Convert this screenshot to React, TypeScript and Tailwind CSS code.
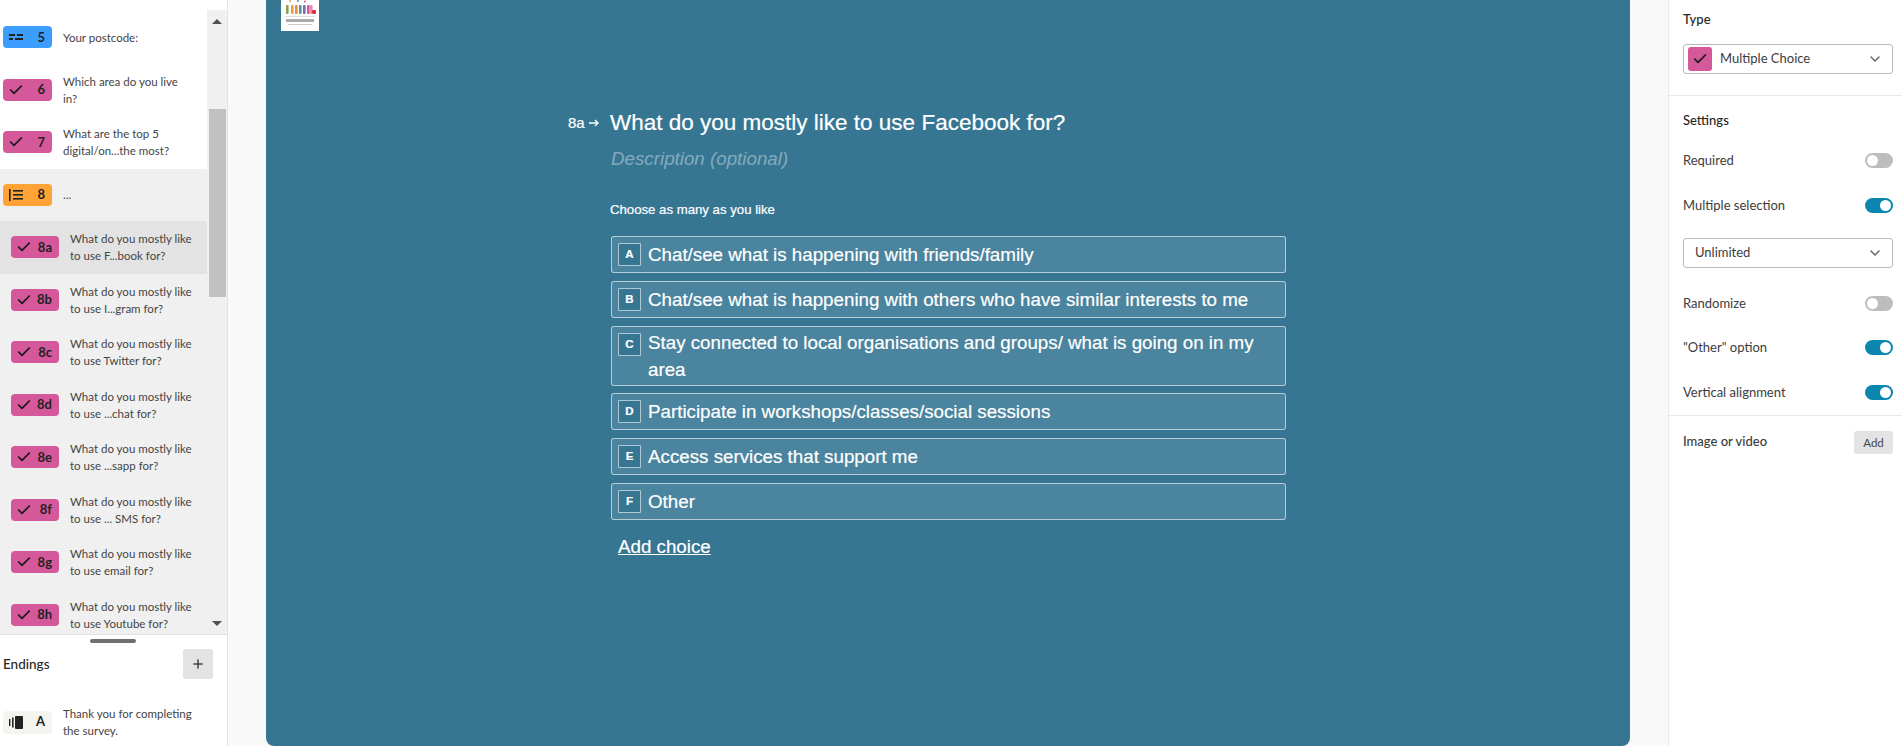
import React from "react";
import { Check, ChevronDown, Plus } from "lucide-react";

const PINK = "bg-[#d5589a]";

function CheckIcon() {
  return <Check className="w-[16px] h-[16px]" strokeWidth={2.6} color="#1a1a1a" />;
}

function ShortIcon() {
  return (
    <svg width="14" height="8" viewBox="0 0 14 8" fill="#222">
      <rect x="0" y="1" width="6" height="2" />
      <rect x="8" y="1" width="6" height="2" />
      <rect x="0" y="5" width="4" height="2" />
      <rect x="6" y="5" width="8" height="2" />
    </svg>
  );
}

function GroupIcon() {
  return (
    <svg width="14" height="12" viewBox="0 0 14 12" fill="#222">
      <rect x="0" y="0" width="1.6" height="12" />
      <rect x="4" y="1" width="10" height="1.6" />
      <rect x="4" y="5" width="10" height="1.6" />
      <rect x="4" y="9" width="10" height="1.6" />
    </svg>
  );
}

function EndIcon() {
  return (
    <svg width="14" height="13" viewBox="0 0 14 13" fill="#222">
      <rect x="0" y="3" width="1.4" height="7" />
      <rect x="3" y="1.5" width="1.6" height="10" />
      <rect x="6" y="0" width="8" height="13" rx="1" />
    </svg>
  );
}

type Row = { n: string; lines: string[]; kind: "check" | "short" | "group"; sub?: boolean; selected?: boolean };

const sub = (n: string, second: string, selected = false): Row => ({
  n,
  lines: ["What do you mostly like", second],
  kind: "check",
  sub: true,
  selected,
});

const rows: Row[] = [
  { n: "5", lines: ["Your postcode:"], kind: "short" },
  { n: "6", lines: ["Which area do you live", "in?"], kind: "check" },
  { n: "7", lines: ["What are the top 5", "digital/on...the most?"], kind: "check" },
  { n: "8", lines: ["..."], kind: "group" },
  sub("8a", "to use F...book for?", true),
  sub("8b", "to use I...gram for?"),
  sub("8c", "to use Twitter for?"),
  sub("8d", "to use ...chat for?"),
  sub("8e", "to use ...sapp for?"),
  sub("8f", "to use ... SMS for?"),
  sub("8g", "to use email for?"),
  sub("8h", "to use Youtube for?"),
];

function QuestionRow({ r }: { r: Row }) {
  const grouped = r.sub || r.kind === "group";
  const bg = r.selected ? "bg-[#e3e3e3]" : grouped ? "bg-[#f0f0f0]" : "bg-white";
  const badge = r.kind === "short" ? "bg-[#3b9eff]" : r.kind === "group" ? "bg-[#ffa337]" : PINK;
  return (
    <div className={`h-[52.5px] shrink-0 flex items-center ${bg} ${r.sub ? "pl-[11px]" : "pl-[3px]"}`}>
      <div className={`${badge} ${r.sub ? "w-[48px]" : "w-[49px]"} h-[22px] rounded-[4px] flex items-center justify-between ${r.kind === "check" ? "pl-[5px]" : "pl-[6px]"} pr-[7px] shrink-0`}>
        {r.kind === "check" ? <CheckIcon /> : r.kind === "short" ? <ShortIcon /> : <GroupIcon />}
        <span className="text-[13px] font-bold text-[#222]">{r.n}</span>
      </div>
      <div className="ml-[11px] text-[11.5px] leading-[17px] text-[#444]">
        {r.lines.map((l) => (
          <div key={l}>{l}</div>
        ))}
      </div>
    </div>
  );
}

function Sidebar() {
  return (
    <aside className="w-[228px] h-[746px] shrink-0 bg-white border-r border-[#e3e3e3] flex flex-col font-['Lato',sans-serif]">
      <div className="h-[10px] shrink-0" />
      <div className="h-[625px] shrink-0 flex overflow-hidden border-b border-[#e3e3e3]">
        <div className="w-[207px] shrink-0 flex flex-col pt-px">
          {rows.map((r) => (
            <QuestionRow key={r.n} r={r} />
          ))}
        </div>
        <div className="w-[20px] shrink-0 bg-[#f0f0f0] flex flex-col items-center pt-[9px] pb-[8px]">
          <div className="w-0 h-0 border-x-[5px] border-x-transparent border-b-[5px] border-b-[#505050]" />
          <div className="mt-[85px] w-[17px] h-[188px] bg-[#c1c1c1]" />
          <div className="flex-1" />
          <div className="w-0 h-0 border-x-[5px] border-x-transparent border-t-[5px] border-t-[#505050]" />
        </div>
      </div>
      <div className="h-[4px] mt-[4px] flex justify-center pr-[1px]">
        <div className="w-[46px] h-[4px] rounded-full bg-[#707070]" />
      </div>
      <div className="mt-[6px] h-[30px] flex items-center justify-between pl-[3px] pr-[14px]">
        <span className="text-[13.5px] font-medium text-[#262626]">Endings</span>
        <button className="w-[30px] h-[30px] rounded-[3px] bg-[#e3e3e3] flex items-center justify-center">
          <Plus className="w-[14px] h-[14px]" strokeWidth={2.6} color="#444" />
        </button>
      </div>
      <div className="mt-[26px] flex items-center pl-[3px]">
        <div className="w-[49px] h-[23px] rounded-[4px] bg-[#f5f5f0] flex items-center justify-between pl-[6px] pr-[7px] shrink-0">
          <EndIcon />
          <span className="text-[13px] font-bold text-[#222]">A</span>
        </div>
        <div className="ml-[11px] text-[11.5px] leading-[17px] text-[#444]">
          <div>Thank you for completing</div>
          <div>the survey.</div>
        </div>
      </div>
    </aside>
  );
}

const choices: [string, string][] = [
  ["A", "Chat/see what is happening with friends/family"],
  ["B", "Chat/see what is happening with others who have similar interests to me"],
  ["C", "Stay connected to local organisations and groups/ what is going on in my area"],
  ["D", "Participate in workshops/classes/social sessions"],
  ["E", "Access services that support me"],
  ["F", "Other"],
];

function Logo() {
  const bars: [number, string][] = [
    [5, "#8aa04e"], [10, "#e8a33d"], [14, "#e98b3a"], [18, "#5f8fb0"], [22, "#7d6aa8"], [26, "#d5589a"], [29, "#e58ab8"],
  ];
  return (
    <div className="ml-[15px] w-[38px] h-[31px] bg-white shrink-0 overflow-hidden">
      <svg width="38" height="31" viewBox="0 0 38 31" className="blur-[0.6px]">
        {bars.map(([x, c]) => (
          <rect key={x} x={x} y={5} width="2.6" height="9" rx="1" fill={c} />
        ))}
        <circle cx="9" cy="1" r="1" fill="#e8a33d" />
        <circle cx="17" cy="1" r="1" fill="#5f8fb0" />
        <circle cx="24" cy="1.5" r="1" fill="#d5589a" />
        <rect x="31" y="10" width="4" height="4" rx="1" fill="#d9343a" />
        <rect x="4" y="16" width="30" height="1" fill="#ddd" />
        <rect x="5" y="19" width="28" height="3" fill="#aaa" />
        <rect x="7" y="24" width="24" height="1" fill="#ccc" />
      </svg>
    </div>
  );
}

function Canvas() {
  return (
    <main className="flex-1 h-[746px] bg-[#f9f9f9] pl-[38px] pr-[38px]">
      <div className="h-full bg-[#367693] rounded-b-[8px] font-['Liberation_Sans',sans-serif] text-white flex flex-col [-webkit-text-stroke:0.2px_white]">
        <Logo />
        <div className="mt-[76px] ml-[302px] flex items-start">
          <div className="w-[43px] flex items-center justify-start h-[32px] gap-[4px] text-[15px] shrink-0">
            <span>8a</span>
            <svg width="10" height="8" viewBox="0 0 10 8" fill="none" stroke="white" strokeWidth="1.4">
              <path d="M0 4h9M6 1l3 3-3 3" />
            </svg>
          </div>
          <div className="w-[675px]">
            <div className="text-[22.5px] leading-[32px] -ml-px">What do you mostly like to use Facebook for?</div>
            <div className="mt-[6px] text-[18.75px] leading-[27px] italic text-white/40 [-webkit-text-stroke:0]">Description (optional)</div>
            <div className="mt-[28px] text-[13.2px] leading-[20px] -ml-px">Choose as many as you like</div>
            <div className="mt-[16px] flex flex-col gap-[8px]">
              {choices.map(([k, t]) => (
                <div key={k} className={`flex items-start rounded-[3px] border border-white/60 bg-white/10 pl-[6px] pr-[20px] py-[2px] min-h-[37px] ${k === "C" ? "-mb-px" : ""}`}>
                  <div className="w-[23px] h-[23px] mt-[4px] shrink-0 border border-white/60 rounded-[1px] bg-[#367693] flex items-center justify-center text-[11.5px] font-bold">
                    {k}
                  </div>
                  <div className="ml-[7px] text-[18.75px] leading-[27px] self-center">{t}</div>
                </div>
              ))}
            </div>
            <div className="mt-[13px] ml-[7px] text-[18.75px] leading-[27px] underline">Add choice</div>
          </div>
        </div>
      </div>
    </main>
  );
}

function Toggle({ on }: { on: boolean }) {
  return (
    <div className={`w-[28px] h-[15px] rounded-full flex items-center px-[2px] ${on ? "bg-[#0b86ae] justify-end" : "bg-[#bdbdbd] justify-start"}`}>
      <div className="w-[11px] h-[11px] rounded-full bg-white" />
    </div>
  );
}

function SettingRow({ label, on, mt }: { label: string; on: boolean; mt: string }) {
  return (
    <div className={`${mt} h-[20px] flex items-center justify-between pl-[14px] pr-[9px]`}>
      <span className="text-[13px] leading-[18px] pb-px text-[#3c3c3c]">{label}</span>
      <Toggle on={on} />
    </div>
  );
}

function RightPanel() {
  return (
    <aside className="w-[234px] h-[746px] shrink-0 bg-white border-l border-[#e9e9e9] font-['Lato',sans-serif] flex flex-col">
      <div className="mt-[10px] h-[20px] pl-[14px] flex items-center text-[13px] font-medium text-[#262626]">Type</div>
      <div className="mt-[14px] ml-[14px] mr-[9px] h-[30px] rounded-[3px] border border-[#b9b9b9] flex items-center pl-[4px] pr-[9px]">
        <div className={`w-[24px] h-[24px] rounded-[3px] ${PINK} flex items-center justify-center`}>
          <CheckIcon />
        </div>
        <span className="ml-[8px] text-[13px] pb-px text-[#3c3c3c] flex-1">Multiple Choice</span>
        <ChevronDown className="w-[16px] h-[16px]" strokeWidth={2.2} color="#666" />
      </div>
      <div className="mt-[21px] border-t border-[#e9e9e9]" />
      <div className="mt-[15px] h-[20px] pl-[14px] flex items-center text-[13px] font-medium text-[#262626]">Settings</div>
      <SettingRow label="Required" on={false} mt="mt-[19px]" />
      <SettingRow label="Multiple selection" on mt="mt-[25px]" />
      <div className="mt-[23px] ml-[14px] mr-[9px] h-[30px] rounded-[3px] border border-[#b9b9b9] flex items-center pl-[11px] pr-[9px]">
        <span className="text-[13px] pb-px text-[#3c3c3c] flex-1">Unlimited</span>
        <ChevronDown className="w-[16px] h-[16px]" strokeWidth={2.2} color="#666" />
      </div>
      <SettingRow label="Randomize" on={false} mt="mt-[25px]" />
      <SettingRow label={'"Other" option'} on mt="mt-[24px]" />
      <SettingRow label="Vertical alignment" on mt="mt-[25px]" />
      <div className="mt-[13px] border-t border-[#e9e9e9]" />
      <div className="mt-[15px] flex items-center justify-between pl-[14px] pr-[9px]">
        <span className="text-[13px] pb-px font-medium text-[#3c3c3c]">Image or video</span>
        <button className="w-[39px] h-[23px] rounded-[3px] bg-[#e3e3e3] text-[11.5px] text-[#444]">Add</button>
      </div>
    </aside>
  );
}

export default function App() {
  return (
    <div className="w-[1902px] h-[746px] flex overflow-hidden bg-white">
      <Sidebar />
      <Canvas />
      <RightPanel />
    </div>
  );
}
